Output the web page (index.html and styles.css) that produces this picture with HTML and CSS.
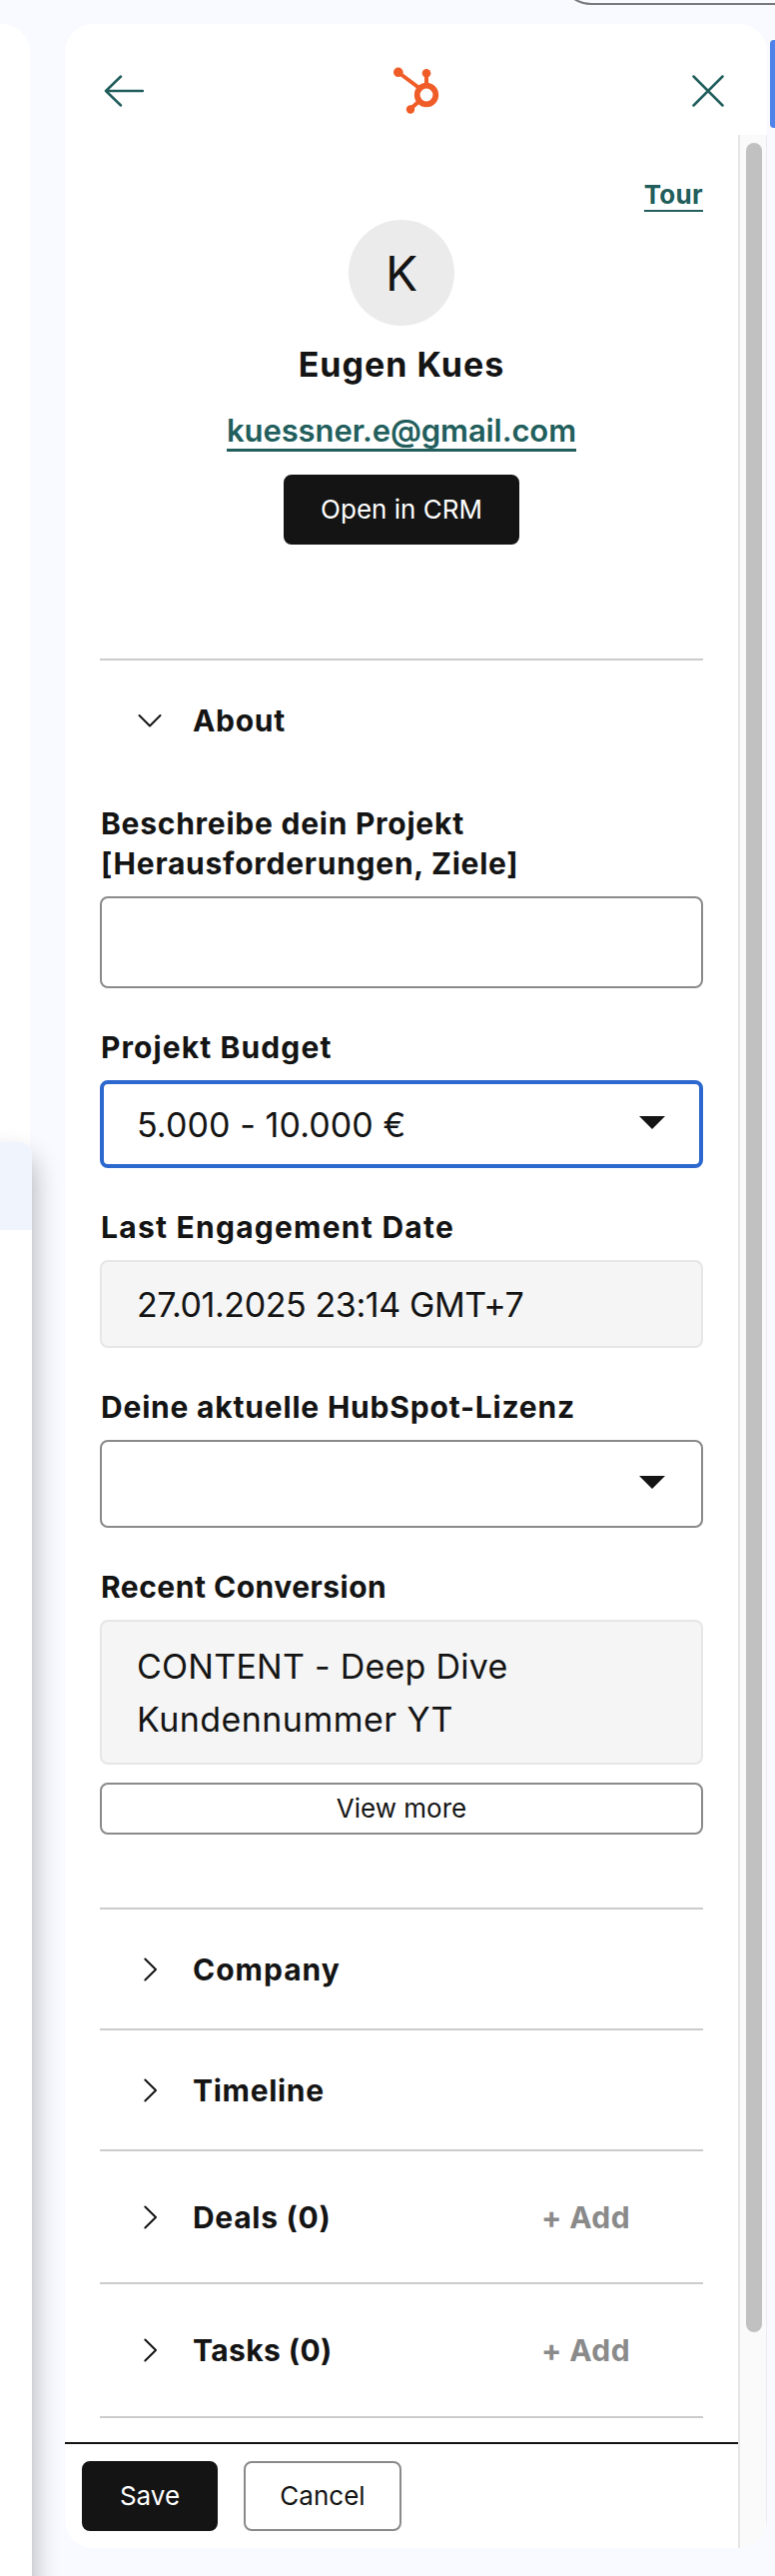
FILE: index.html
```html
<!DOCTYPE html>
<html lang="de">
<head>
<meta charset="utf-8">
<title>Eugen Kues</title>
<link rel="stylesheet" href="styles.css">
</head>
<body>
<div class="app">
  <div class="search-pill"></div>
  <div class="app-button"></div>
  <div class="mail-list"></div>
  <div class="popover"><div class="popover-row"></div></div>
  <main class="panel">
    <header class="panel-header">
      <svg class="icon-back" viewBox="0 0 40 32"><path d="M39 16H2M17 1.500L2 16l15 14.500"/></svg>
      <svg class="logo" viewBox="0 0 46 48">
        <path d="M5 5.500L27 22M33 7v14M26 34l-9 8"/>
        <circle class="ring" cx="33" cy="28" r="9.300"/>
        <circle class="dot" cx="4.800" cy="5.300" r="4.800"/>
        <circle class="dot" cx="33" cy="6.200" r="4.300"/>
        <circle class="dot" cx="17" cy="42.500" r="4.200"/>
      </svg>
      <svg class="icon-close" viewBox="0 0 32 32"><path d="M1.500 1.500l29 29M30.500 1.500l-29 29"/></svg>
    </header>
    <div class="panel-main">
      <div class="column">
        <div class="content">
          <a class="tour">Tour</a>
          <div class="profile">
            <div class="avatar">K</div>
            <h1 class="name">Eugen Kues</h1>
            <a class="email">kuessner.e@gmail.com</a>
            <button class="btn btn-dark btn-open">Open in CRM</button>
          </div>
          <section class="section">
            <h2 class="section-head"><svg class="chev" viewBox="0 0 24 24"><path d="M1.500 7L12 17.500 22.500 7"/></svg><span class="t-about">About</span></h2>
            <label class="label l-desc">Beschreibe dein Projekt<br>[Herausforderungen, Ziele]</label>
            <div class="field field-area"></div>
            <label class="label l-budget">Projekt Budget</label>
            <div class="field field-focus"><span class="v-budget">5.000 - 10.000 €</span><i class="caret"></i></div>
            <label class="label l-date">Last Engagement Date</label>
            <div class="field field-readonly"><span class="v-date">27.01.2025 23:14 GMT+7</span></div>
            <label class="label l-license">Deine aktuelle HubSpot-Lizenz</label>
            <div class="field"><span></span><i class="caret"></i></div>
            <label class="label l-conv">Recent Conversion</label>
            <div class="field field-readonly field-tall"><div class="v-conv">CONTENT - Deep Dive<br><span class="v-conv-end">Kundennummer YT</span></div></div>
            <button class="btn btn-more">View more</button>
          </section>
          <section class="section"><h2 class="section-head"><svg class="chev" viewBox="0 0 24 24"><path d="M7.300 1.500L18 12 7.300 22.500"/></svg><span class="t-company">Company</span></h2></section>
          <section class="section"><h2 class="section-head"><svg class="chev" viewBox="0 0 24 24"><path d="M7.300 1.500L18 12 7.300 22.500"/></svg><span class="t-timeline">Timeline</span></h2></section>
          <section class="section"><h2 class="section-head head-deals"><svg class="chev" viewBox="0 0 24 24"><path d="M7.300 1.500L18 12 7.300 22.500"/></svg><span class="t-deals">Deals (0)</span><span class="add">+ Add</span></h2></section>
          <section class="section section-last"><h2 class="section-head head-tasks"><svg class="chev" viewBox="0 0 24 24"><path d="M7.300 1.500L18 12 7.300 22.500"/></svg><span class="t-tasks">Tasks (0)</span><span class="add">+ Add</span></h2></section>
        </div>
        <footer class="footer">
          <button class="btn btn-dark btn-save">Save</button>
          <button class="btn btn-cancel">Cancel</button>
        </footer>
      </div>
      <div class="scrollbar"><div class="thumb"></div></div>
    </div>
  </main>
</div>
</body>
</html>
```
FILE: styles.css
```css
* { box-sizing: border-box; }
body { margin: 0; background: #f8faff; color: #141414; font-family: Inter, "Open Sans", sans-serif; }
.app { position: relative; width: 776px; height: 2578px; padding: 24px 8px 28px 0; display: flex; justify-content: space-between; overflow: hidden; }

/* Surroundings of the panel */
.search-pill { position: absolute; left: 560px; top: -60px; width: 300px; height: 65px; border: 2px solid #77797c; border-radius: 32px; }
.app-button { position: absolute; left: 771px; top: 40px; width: 40px; height: 88px; border-radius: 4px; background: #4f83ea; }
.mail-list { width: 30px; height: 2554px; background: #fff; border-top-right-radius: 28px; }
.popover { position: absolute; left: -40px; top: 1143px; width: 72px; height: 1500px; background: #fff; border-top-right-radius: 12px; box-shadow: 0 16px 28px rgba(0, 0, 0, .32); }
.popover-row { height: 88px; background: #f0f5fd; border-top-right-radius: 12px; }

.panel { position: relative; width: 703px; background: #fff; border-radius: 28px; overflow: hidden; display: flex; flex-direction: column; }
.panel-header { height: 111px; padding: 23px 43px 0 39px; display: flex; align-items: center; justify-content: space-between; }
.icon-back { width: 40px; height: 32px; }
.icon-close { width: 32px; height: 32px; }
.icon-back path, .icon-close path { fill: none; stroke: #215e5c; stroke-width: 2.500; stroke-linecap: round; stroke-linejoin: round; }
.logo { width: 46px; height: 48px; margin-left: -4px; }
.logo path, .ring { fill: none; stroke: #f05c28; stroke-width: 4; }
.logo .ring { stroke-width: 5.800; }
.dot { fill: #f05c28; }

.panel-main { flex: 1; display: flex; }
.column { width: 674px; display: flex; flex-direction: column; }
.content { flex: 1; padding: 45px 35px 0; display: flex; flex-direction: column; }
.scrollbar { width: 29px; padding: 8px 6px 0; border-left: 2px solid #e6e6e6; border-right: 1px solid #ececec; background: #fafafa; }
.thumb { width: 16px; height: 2191px; border-radius: 8px; background: #c1c1c1; }

.tour { align-self: flex-end; font-size: 26px; font-weight: 700; letter-spacing: .3px; line-height: 30px; color: #215e5c; border-bottom: 2px solid #215e5c; }
.profile { margin-top: 8px; display: flex; flex-direction: column; align-items: center; }
.avatar { width: 106px; height: 106px; border-radius: 50%; background: #ebebeb; display: flex; align-items: center; justify-content: center; font-size: 48px; font-weight: 400; }
.name { margin: 14px 0 0; font-size: 34px; font-weight: 700; letter-spacing: 1px; line-height: 50px; }
.email { margin-top: 23px; font-size: 31px; font-weight: 600; letter-spacing: -.1px; line-height: 36px; color: #215e5c; border-bottom: 3px solid #215e5c; }
.btn { font: 400 26px Inter, sans-serif; border: 2px solid #8a8a8a; border-radius: 8px; background: #fff; color: #141414; padding: 0 0 2px; white-space: nowrap; }
.btn-dark { background: #141414; border-color: #141414; color: #fff; }
.btn-open { width: 236px; height: 70px; margin: 23px 0 114px; }

.section { border-top: 2px solid #ccc; display: flex; flex-direction: column; }
.section-last { border-bottom: 2px solid #ccc; }
.section-head { margin: 0; height: 119px; padding: 0 73px 0 38px; display: flex; align-items: center; font-size: 30px; font-weight: 700; letter-spacing: .7px; white-space: nowrap; }
.head-deals { height: 131px; }
.head-tasks { height: 132px; }
.t-company { letter-spacing: 1px; }
.t-tasks { letter-spacing: .4px; }
.chev { width: 24px; height: 24px; margin-right: 31px; }
.chev path { fill: none; stroke: #141414; stroke-width: 2; stroke-linecap: round; stroke-linejoin: round; }
.add { margin-left: auto; color: #8a8a8a; letter-spacing: .4px; }

.label { margin: 39px 0 13px; padding-left: 1px; font-size: 30px; font-weight: 700; letter-spacing: .75px; line-height: 40px; white-space: nowrap; }
.l-desc { margin-top: 24px; }
.l-budget { letter-spacing: 1.1px; }
.l-date { letter-spacing: 1.250px; }
.l-license { letter-spacing: .8px; }
.l-conv { letter-spacing: .5px; }
.field { height: 88px; padding: 0 35px; border: 2px solid #8a8a8a; border-radius: 8px; display: flex; align-items: center; justify-content: space-between; font-size: 34px; font-weight: 400; line-height: 53px; white-space: nowrap; }
.field-area { height: 92px; }
.field-focus { border: 4px solid #2d68ce; padding: 0 33px; }
.field-readonly { background: #f5f5f5; border-color: #e6e6e6; }
.field-tall { height: 145px; }
.v-budget { letter-spacing: .1px; }
.v-date { letter-spacing: -.4px; }
.v-conv { letter-spacing: .250px; }
.v-conv-end { letter-spacing: .450px; }
.caret { border: 13px solid transparent; border-top-color: #141414; border-bottom: 0; margin: 0 1px 3px 0; }
.btn-more { height: 52px; margin: 18px 0 73px; }

.footer { height: 106px; border-top: 2px solid #141414; padding: 17px; display: flex; gap: 26px; }
.btn-save { width: 136px; height: 70px; }
.btn-cancel { width: 158px; height: 70px; }
```
